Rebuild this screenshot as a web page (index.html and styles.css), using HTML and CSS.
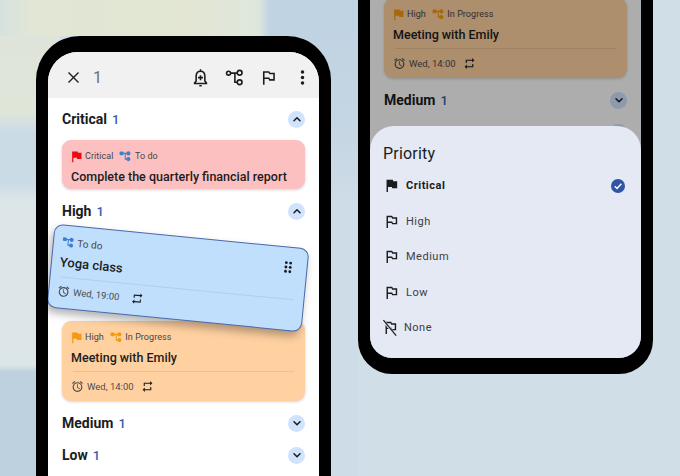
FILE: index.html
```html
<!DOCTYPE html>
<html lang="en">
<head>
  <meta charset="UTF-8">
  <meta name="viewport" content="width=device-width, initial-scale=1.0">
  <title>Task priority</title>
  <link rel="stylesheet" href="styles.css">
</head>
<body>
  <!-- shared icons -->
  <svg class="icon-defs" xmlns="http://www.w3.org/2000/svg">
    <symbol id="flag-fill" viewBox="0 0 24 24"><path d="M14.4 6L14 4H5v17h2v-7h5.6l.4 2h7V6z"/></symbol>
    <symbol id="flag-line" viewBox="0 0 24 24"><path d="M14 6l-1-2H5v17h2v-7h5l1 2h7V6h-6zm4 8h-4l-1-2H7V6h5l1 2h5v6z"/></symbol>
    <symbol id="tree" viewBox="0 0 24 24"><rect x="1" y="3" width="8" height="7" rx="2.5"/><path d="M8 5.500h8v2h-3v9h3v2h-5V7.500H8z"/><circle cx="18" cy="6.500" r="4"/><circle cx="18" cy="17.500" r="4"/></symbol>
    <symbol id="alarm" viewBox="0 0 24 24"><path d="M22 5.720l-4.600-3.860-1.290 1.530 4.600 3.860L22 5.720zM7.880 3.390L6.600 1.860 2 5.710l1.290 1.530 4.590-3.850zM12.500 8H11v6l4.750 2.850.75-1.230-4-2.370V8zM12 4c-4.970 0-9 4.030-9 9s4.030 9 9 9 9-4.030 9-9-4.030-9-9-9zm0 16c-3.870 0-7-3.130-7-7s3.130-7 7-7 7 3.130 7 7-3.130 7-7 7z"/></symbol>
    <symbol id="repeat" viewBox="0 0 24 24"><path d="M7 7h10v3l4-4-4-4v3H5v6h2V7zm10 10H7v-3l-4 4 4 4v-3h12v-6h-2v4z"/></symbol>
    <symbol id="chev-up" viewBox="0 0 24 24"><path d="M6 15.500l6-6 6 6" fill="none" stroke="currentColor" stroke-width="3" stroke-linecap="round" stroke-linejoin="round"/></symbol>
    <symbol id="chev-down" viewBox="0 0 24 24"><path d="M6 9.500l6 6 6-6" fill="none" stroke="currentColor" stroke-width="3" stroke-linecap="round" stroke-linejoin="round"/></symbol>
  </svg>

  <div class="stage">
    <!-- left phone: list with a card being dragged -->
    <div class="phone phone-left">
      <div class="screen">
        <div class="toolbar">
          <svg class="tool-close line-icon" viewBox="0 0 24 24"><path d="M4 4l16 16M20 4L4 20" stroke="currentColor" stroke-width="2.200"/></svg>
          <span class="tool-count">1</span>
          <div class="tool-actions">
            <svg class="tool-icon line-icon" viewBox="0 0 24 24" stroke="currentColor" stroke-width="2"><path d="M12 1.500v2.500M12 4c-3.700 0-5.500 2.800-5.500 6.500v6L4.500 19v.5h15V19l-2-2.500v-6C17.500 6.800 15.700 4 12 4zM10.500 22.500h3M12 9v6.500M8.800 12.200h6.400"/></svg>
            <svg class="tool-icon line-icon" viewBox="0 0 24 24" stroke="currentColor" stroke-width="2"><circle cx="4.500" cy="6.500" r="2.500"/><circle cx="18.500" cy="6" r="3"/><circle cx="18.500" cy="18" r="3"/><path d="M7 6.500h8.500M12.500 6.500V18h3"/></svg>
            <svg class="tool-icon" viewBox="0 0 24 24"><use href="#flag-line"/></svg>
            <svg class="tool-icon" viewBox="0 0 24 24"><circle cx="12" cy="5" r="2.200"/><circle cx="12" cy="12" r="2.200"/><circle cx="12" cy="19" r="2.200"/></svg>
          </div>
        </div>

        <div class="task-list">
          <div class="section-head">
            <span class="section-name">Critical</span><span class="section-count">1</span>
            <span class="toggle"><svg viewBox="0 0 24 24"><use href="#chev-up"/></svg></span>
          </div>
          <div class="card card-red">
            <div class="chips">
              <span class="chip"><svg class="flag-red" viewBox="0 0 24 24"><use href="#flag-fill"/></svg>Critical</span>
              <span class="chip"><svg class="tree-blue" viewBox="0 0 24 24"><use href="#tree"/></svg>To do</span>
            </div>
            <div class="card-title">Complete the quarterly financial report</div>
          </div>

          <div class="section-head section-gap">
            <span class="section-name">High</span><span class="section-count">1</span>
            <span class="toggle"><svg viewBox="0 0 24 24"><use href="#chev-up"/></svg></span>
          </div>
          <div class="drop-slot"></div>
          <div class="card card-orange">
            <div class="chips">
              <span class="chip"><svg class="flag-orange" viewBox="0 0 24 24"><use href="#flag-fill"/></svg>High</span>
              <span class="chip"><svg class="tree-orange" viewBox="0 0 24 24"><use href="#tree"/></svg>In Progress</span>
            </div>
            <div class="card-title">Meeting with Emily</div>
            <div class="card-rule"></div>
            <div class="card-meta">
              <svg viewBox="0 0 24 24"><use href="#alarm"/></svg><span>Wed, 14:00</span>
              <svg class="meta-repeat" viewBox="0 0 24 24"><use href="#repeat"/></svg>
            </div>
          </div>

          <div class="section-head section-gap">
            <span class="section-name">Medium</span><span class="section-count">1</span>
            <span class="toggle"><svg viewBox="0 0 24 24"><use href="#chev-down"/></svg></span>
          </div>
          <div class="section-head">
            <span class="section-name">Low</span><span class="section-count">1</span>
            <span class="toggle"><svg viewBox="0 0 24 24"><use href="#chev-down"/></svg></span>
          </div>
        </div>

        <div class="card card-drag">
          <div class="chips">
            <span class="chip"><svg class="tree-blue" viewBox="0 0 24 24"><use href="#tree"/></svg>To do</span>
            <svg class="grip" viewBox="0 0 12 18"><circle cx="3" cy="3" r="2"/><circle cx="9" cy="3" r="2"/><circle cx="3" cy="9" r="2"/><circle cx="9" cy="9" r="2"/><circle cx="3" cy="15" r="2"/><circle cx="9" cy="15" r="2"/></svg>
          </div>
          <div class="card-title">Yoga class</div>
          <div class="card-rule"></div>
          <div class="card-meta">
            <svg viewBox="0 0 24 24"><use href="#alarm"/></svg><span>Wed, 19:00</span>
            <svg class="meta-repeat" viewBox="0 0 24 24"><use href="#repeat"/></svg>
          </div>
        </div>
      </div>
    </div>

    <!-- right phone: priority sheet over the list -->
    <div class="phone phone-right">
      <div class="screen">
        <div class="task-list list-scrolled">
          <div class="card card-orange">
            <div class="chips">
              <span class="chip"><svg class="flag-orange" viewBox="0 0 24 24"><use href="#flag-fill"/></svg>High</span>
              <span class="chip"><svg class="tree-orange" viewBox="0 0 24 24"><use href="#tree"/></svg>In Progress</span>
            </div>
            <div class="card-title">Meeting with Emily</div>
            <div class="card-rule"></div>
            <div class="card-meta">
              <svg viewBox="0 0 24 24"><use href="#alarm"/></svg><span>Wed, 14:00</span>
              <svg class="meta-repeat" viewBox="0 0 24 24"><use href="#repeat"/></svg>
            </div>
          </div>
          <div class="section-head section-gap">
            <span class="section-name">Medium</span><span class="section-count">1</span>
            <span class="toggle"><svg viewBox="0 0 24 24"><use href="#chev-down"/></svg></span>
          </div>
          <div class="section-head">
            <span class="toggle"><svg viewBox="0 0 24 24"><use href="#chev-down"/></svg></span>
          </div>
        </div>
        <div class="scrim"></div>
        <div class="sheet">
          <div class="sheet-title">Priority</div>
          <div class="option option-on">
            <svg viewBox="0 0 24 24"><use href="#flag-fill"/></svg><span>Critical</span>
            <svg class="option-check" viewBox="0 0 24 24"><circle cx="12" cy="12" r="12" fill="#2f55a4"/><path d="M6.500 12.500l3.800 3.800 7.500-8" fill="none" stroke="#fff" stroke-width="2.600"/></svg>
          </div>
          <div class="option"><svg viewBox="0 0 24 24"><use href="#flag-line"/></svg><span>High</span></div>
          <div class="option"><svg viewBox="0 0 24 24"><use href="#flag-line"/></svg><span>Medium</span></div>
          <div class="option"><svg viewBox="0 0 24 24"><use href="#flag-line"/></svg><span>Low</span></div>
          <div class="option option-none">
            <svg viewBox="0 0 24 24"><use href="#flag-line"/><path d="M2 2l17 21" fill="none" stroke="#e4e9f3" stroke-width="3.500"/><path d="M2 1.500l18 22" fill="none" stroke="currentColor" stroke-width="1.700"/></svg><span>None</span>
          </div>
        </div>
      </div>
    </div>
  </div>
</body>
</html>
```

FILE: styles.css
```css
* {
  margin: 0;
  padding: 0;
  box-sizing: border-box;
}

body {
  width: 680px;
  height: 476px;
  overflow: hidden;
  font-family: Roboto, "Liberation Sans", sans-serif;
  color: #1a1c1e;
}

.icon-defs {
  display: none;
}

svg {
  fill: currentColor;
  flex: none;
}

svg.line-icon {
  fill: none;
}

.stage {
  width: 680px;
  height: 476px;
  display: flex;
  align-items: flex-start;
  gap: 27px;
  padding-left: 36px;
  overflow: hidden;
  background:
    linear-gradient(90deg, #d6e1df 0, #e1e6d5 30px, #e2e6d3 190px, #dfe7dd 258px, #c0d3e2 270px) 0 0 / 358px 36px no-repeat,
    linear-gradient(180deg, #dde4da 0, #e0e5d8 112px, #cbdbe6 132px, #cbdbe6 183px, #dce5e7 200px, #dce5e7 365px, #bed1df 372px) 0 0 / 60px 476px no-repeat,
    linear-gradient(180deg, #c0d3e2 0, #c4d5e3 120px, #cddce6 200px) 280px 0 / 78px 476px no-repeat,
    #d0dee7;
}

.phone {
  width: 295px;
  background: #000;
  padding: 0 12px;
  flex: none;
}

.phone-left {
  height: 460px;
  margin-top: 36px;
  padding-top: 16px;
  border-radius: 44px 44px 0 0;
}

.phone-right {
  height: 374px;
  padding-bottom: 16px;
  border-radius: 0 0 34px 34px;
}

.screen {
  position: relative;
  height: 100%;
  overflow: hidden;
  background: #fff;
}

.phone-left .screen {
  border-radius: 30px 30px 0 0;
}

.phone-right .screen {
  border-radius: 0 0 22px 22px;
}

.toolbar {
  height: 46px;
  display: flex;
  align-items: center;
  background: #f1f1f1;
  padding: 5px 7px 0 18px;
}

.tool-close {
  width: 15px;
  height: 15px;
}

.tool-count {
  margin-left: 12px;
  font-size: 16px;
  color: #6c6e70;
}

.tool-actions {
  margin-left: auto;
  display: flex;
  gap: 15px;
}

.tool-icon {
  width: 19px;
  height: 19px;
}

.task-list {
  padding: 5px 14px 0;
}

.list-scrolled {
  padding-top: 0;
  margin-top: -2px;
}

.section-head {
  height: 32px;
  display: flex;
  align-items: center;
  gap: 5px;
}

.section-gap {
  margin-top: 6px;
}

.section-name {
  font-size: 14px;
  font-weight: 700;
}

.section-count {
  font-size: 13px;
  font-weight: 500;
  color: #3a5ea8;
}

.toggle {
  margin-left: auto;
  width: 17px;
  height: 17px;
  border-radius: 50%;
  background: #cfe3fd;
  display: flex;
  align-items: center;
  justify-content: center;
}

.toggle svg {
  width: 12px;
  height: 12px;
}

.card {
  border-radius: 9px;
  padding: 9px 9px 0;
  margin-top: 5px;
  box-shadow: 0 1px 3px rgba(0, 0, 0, 0.18);
}

.card-red {
  height: 49px;
  background: #fdc0c0;
}

.card-orange {
  height: 80px;
  background: #ffd1a1;
}

.list-scrolled .card-orange {
  margin-top: 0;
}

.card-drag {
  position: absolute;
  left: 2px;
  top: 184px;
  width: 256px;
  height: 84px;
  margin: 0;
  padding: 9px 8px 0;
  border: 1.500px solid #4a68ad;
  background: #c0dffd;
  box-shadow: -2px 5px 8px rgba(0, 0, 0, 0.3);
  transform: rotate(5.600deg);
}

.chips {
  height: 14px;
  display: flex;
  align-items: center;
  gap: 6px;
}

.chip {
  display: flex;
  align-items: center;
  gap: 1px;
  font-size: 9px;
  letter-spacing: 0.05px;
  color: #44464a;
}

.flag-red,
.flag-orange {
  width: 15px;
  height: 15px;
  margin-left: -2px;
}

.tree-blue,
.tree-orange {
  width: 12.500px;
  height: 12.500px;
  margin-right: 2px;
}

.flag-red {
  color: #ee0a14;
}

.flag-orange,
.tree-orange {
  color: #f39a12;
}

.tree-blue {
  color: #3f7fd0;
}

.card-title {
  margin-top: 6px;
  font-size: 12.500px;
  line-height: 16px;
  font-weight: 500;
}

.card-rule {
  height: 1px;
  margin: 5px 2px 0;
  background: rgba(0, 0, 0, 0.08);
}

.card-meta {
  display: flex;
  align-items: center;
  gap: 3px;
  margin-top: 8px;
  font-size: 9.500px;
  color: #4a4c50;
}

.card-meta svg {
  width: 13px;
  height: 13px;
}

.card-meta .meta-repeat {
  margin-left: 4px;
  color: #1a1c1e;
}

.card-drag .chip {
  font-size: 10px;
}

.card-drag .card-title {
  font-size: 13px;
}

.card-drag .card-rule {
  margin-top: 6px;
}

.card-drag .card-meta {
  margin-top: 7px;
}

.card-drag .meta-repeat {
  margin-left: 8px;
}

.grip {
  width: 9px;
  height: 13px;
  margin: 6px 6px 0 auto;
}

.drop-slot {
  height: 89px;
}

.scrim {
  position: absolute;
  inset: 0;
  background: rgba(0, 0, 0, 0.32);
}

.sheet {
  position: absolute;
  left: 0;
  right: 0;
  bottom: 0;
  height: 232px;
  background: #e4e9f3;
  border-radius: 24px 24px 0 0;
  padding: 17px 16px 0 13px;
}

.sheet-title {
  font-size: 16px;
  line-height: 22px;
  letter-spacing: 0.2px;
  margin-bottom: 3px;
}

.option {
  height: 35.500px;
  display: flex;
  align-items: center;
  gap: 6px;
  font-size: 11px;
  letter-spacing: 0.5px;
  color: #3c3e42;
}

.option svg {
  width: 17px;
  height: 17px;
  color: #1a1c1e;
}

.option-on {
  font-weight: 700;
  color: #1a1c1e;
}

.option-none {
  margin-left: -1px;
  gap: 5px;
}

.option .option-check {
  width: 14px;
  height: 14px;
  margin-left: auto;
}
```
